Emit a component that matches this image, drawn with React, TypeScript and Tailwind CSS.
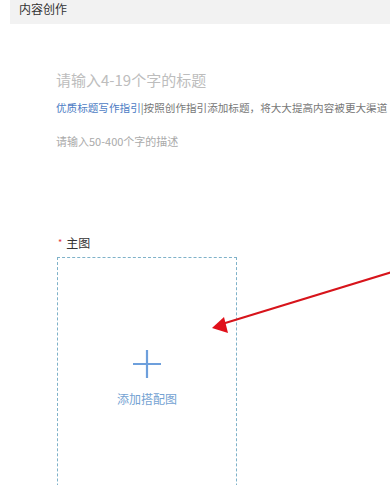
import React from "react";

const font = { fontFamily: '"Noto Sans CJK SC", "Noto Sans", sans-serif' };

const UploadBox = () => (
  <div className="w-[180px] h-[300px] border border-dashed border-[#7fb2c9] flex flex-col items-center pt-[92px]">
    <svg width="28" height="28" viewBox="0 0 28 28">
      <path d="M14 0v28M0 14h28" stroke="#6d9fdc" strokeWidth="2.2" fill="none" />
    </svg>
    <div className="mt-[13px] text-[12px] leading-[16px] text-[#74a2d2]">添加搭配图</div>
  </div>
);

const App = () => {
  return (
    <div className="relative w-[390px] h-[485px] bg-white overflow-hidden" style={font}>
      <div className="ml-[10px] h-[24px] bg-[#f2f2f2] pl-[9px] text-[12px] leading-[17px] text-[#333]">
        内容创作
      </div>

      <div className="pl-[56px]">
        <div className="mt-[46px] text-[15px] leading-[20px] text-[#bdbdbd] whitespace-nowrap">
          请输入4-19个字的标题
        </div>
        <div className="mt-[11px] text-[10.6px] leading-[14px] text-[#777] whitespace-nowrap">
          <span className="text-[#4d7cc4]">优质标题写作指引</span>
          |按照创作指引添加标题，将大大提高内容被更大渠道
        </div>
        <div className="mt-[18px] text-[11px] leading-[16px] text-[#aaa] whitespace-nowrap">
          请输入50-400个字的描述
        </div>

        <div className="mt-[86px] flex items-center text-[12px] leading-[16px] text-[#333]">
          <span className="text-[#e4393c] text-[9px] ml-[2px] mr-[4px]">*</span>
          主图
        </div>
        <div className="mt-[6px] ml-[1px]">
          <UploadBox />
        </div>
      </div>

      <svg
        className="absolute left-0 top-0 pointer-events-none"
        width="390"
        height="485"
        viewBox="0 0 390 485"
      >
        <line x1="392" y1="272" x2="222" y2="324" stroke="#d7141b" strokeWidth="2" />
        <polygon points="212,328 224,317 228,333" fill="#e0101a" />
      </svg>
    </div>
  );
};

export default App;
